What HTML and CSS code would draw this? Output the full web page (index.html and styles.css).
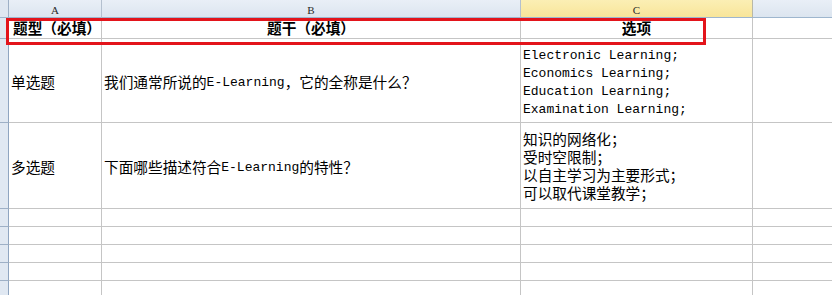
FILE: index.html
```html
<!DOCTYPE html>
<html lang="zh-CN">
<head>
<meta charset="utf-8">
<title>题目导入模板</title>
<link rel="stylesheet" href="styles.css">
</head>
<body>
<div class="sheet">
  <div class="grid">
    <div class="corner"></div>
    <div class="colhead">A</div>
    <div class="colhead">B</div>
    <div class="colhead sel">C</div>
    <div class="colhead last"></div>

    <div class="rowhead"></div>
    <div class="cell hdr">题型（必填）</div>
    <div class="cell hdr center">题干（必填）</div>
    <div class="cell hdr center">选项</div>
    <div class="cell last"></div>

    <div class="rowhead"></div>
    <div class="cell mid">单选题</div>
    <div class="cell mid">我们通常所说的<span class="lat inl">E-Learning</span>，它的全称是什么？</div>
    <div class="cell opts">
      <div class="lines">
        <div class="lat">Electronic Learning;</div>
        <div class="lat">Economics Learning;</div>
        <div class="lat">Education Learning;</div>
        <div class="lat">Examination Learning;</div>
      </div>
    </div>
    <div class="cell last"></div>

    <div class="rowhead"></div>
    <div class="cell mid">多选题</div>
    <div class="cell mid">下面哪些描述符合<span class="lat inl">E-Learning</span>的特性？</div>
    <div class="cell opts">
      <div class="lines cjk">
        <div>知识的网络化；</div>
        <div>受时空限制；</div>
        <div>以自主学习为主要形式；</div>
        <div>可以取代课堂教学；</div>
      </div>
    </div>
    <div class="cell last"></div>

    <div class="rowhead"></div><div class="cell"></div><div class="cell"></div><div class="cell"></div><div class="cell last"></div>
    <div class="rowhead"></div><div class="cell"></div><div class="cell"></div><div class="cell"></div><div class="cell last"></div>
    <div class="rowhead"></div><div class="cell"></div><div class="cell"></div><div class="cell"></div><div class="cell last"></div>
    <div class="rowhead"></div><div class="cell"></div><div class="cell"></div><div class="cell"></div><div class="cell last"></div>
    <div class="rowhead"></div><div class="cell"></div><div class="cell"></div><div class="cell"></div><div class="cell last"></div>
    <div class="rowhead"></div><div class="cell"></div><div class="cell"></div><div class="cell"></div><div class="cell last"></div>
  </div>
  <div class="highlight"></div>
</div>
</body>
</html>
```
FILE: styles.css
```css
html, body {
  margin: 0;
  padding: 0;
  background: #ffffff;
  overflow: hidden;
}

.sheet {
  position: relative;
  width: 832px;
  height: 295px;
  overflow: hidden;
  font-family: "Noto Sans CJK SC", "Liberation Sans", sans-serif;
  font-size: 14.67px;
  color: #000;
}

.grid {
  display: grid;
  grid-template-columns: 9px 93px 419px 232px 79px;
  grid-template-rows: 18px 21px 84px 86px repeat(6, 18px);
}

.corner {
  background: #dfe7f1;
  border-right: 1px solid #9eb0c6;
  border-bottom: 1px solid #9eb6ce;
  box-sizing: border-box;
}

.colhead {
  box-sizing: border-box;
  background: linear-gradient(#e9eff7, #dce5ef);
  border-right: 1px solid #b4c0cf;
  border-bottom: 1px solid #9eb6ce;
  display: flex;
  align-items: flex-end;
  justify-content: center;
  padding-bottom: 1px;
  font-family: "Liberation Serif", serif;
  font-size: 11px;
  line-height: 11px;
  color: #2a2a2a;
}

.colhead.sel {
  background: linear-gradient(#fbefb4, #f8e59a);
  border-right-color: #b8b8a8;
}

.colhead.last {
  border-right: none;
}

.rowhead {
  box-sizing: border-box;
  background: #e0e8f2;
  border-right: 1px solid #8fa5c0;
  border-bottom: 1px solid #9eb0c6;
}

.cell {
  box-sizing: border-box;
  border-right: 1px solid #c5c5c5;
  border-bottom: 1px solid #c5c5c5;
  padding-left: 2px;
  display: flex;
  white-space: nowrap;
  min-width: 0;
}

.cell.last {
  border-right: none;
}

.cell.hdr {
  align-items: flex-end;
  padding-left: 4px;
  font-weight: 700;
  font-size: 14.67px;
  line-height: 20px;
}

.cell.center {
  justify-content: center;
  padding-left: 0;
}

.cell.mid {
  align-items: center;
  padding-top: 2px;
  line-height: 18px;
}

.cell.opts {
  align-items: center;
  padding-top: 4px;
  line-height: 18px;
}

.lines {
  display: flex;
  flex-direction: column;
}

.lines.cjk {
  font-family: "Liberation Mono", "Noto Sans CJK SC", monospace;
  font-size: 14.67px;
}

.lat {
  font-family: "Liberation Mono", monospace;
  font-size: 13px;
}

.lat.inl {
  position: relative;
  top: 1px;
}

.highlight {
  position: absolute;
  left: 6px;
  top: 18px;
  width: 700px;
  height: 27px;
  box-sizing: border-box;
  border: 3px solid #e3141b;
  pointer-events: none;
}
```
